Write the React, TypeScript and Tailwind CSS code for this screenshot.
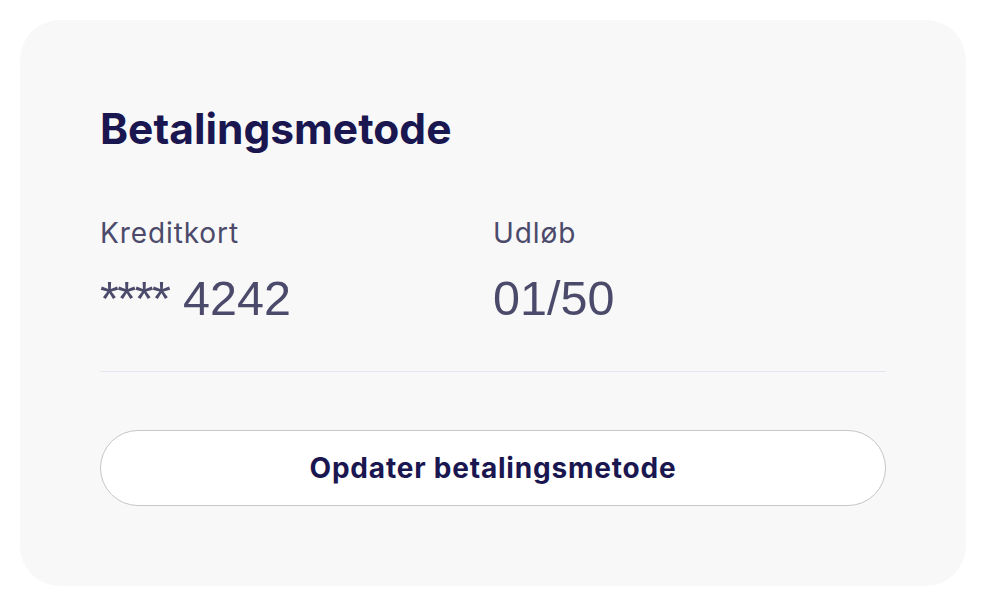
export default function App() {
  return (
    <div className="min-h-screen bg-white p-5 font-['Inter',sans-serif]">
      <section className="rounded-[40px] bg-[#f8f8f8] px-20 pt-[85px] pb-20">
        <h2 className="text-[42.5px] leading-[48px] font-bold text-[#1a1650]">
          Betalingsmetode
        </h2>

        <div className="mt-[63px] grid grid-cols-2">
          <CardField label="Kreditkort">
            <span className="tracking-[-1.5px]">****</span> 4242
          </CardField>
          <CardField label="Udløb">01/50</CardField>
        </div>

        <div className="mt-[45px] h-px bg-[#e3e6ef]" />

        <button
          type="button"
          className="mt-[58px] flex h-[76px] w-full items-center justify-center rounded-full border-[1.5px] border-[#c6c6cb] bg-white text-[28px] font-bold tracking-[0.8px] text-[#1a1650]"
        >
          Opdater betalingsmetode
        </button>
      </section>
    </div>
  );
}

function CardField({
  label,
  children,
}: {
  label: string;
  children: React.ReactNode;
}) {
  return (
    <div>
      <p className="text-[28px] leading-[34px] tracking-[0.9px] text-[#4b4a6b]">
        {label}
      </p>
      <p className="mt-5 font-['Liberation_Sans',Arial,sans-serif] text-[48.5px] leading-[56px] text-[#4b4a6b]">
        {children}
      </p>
    </div>
  );
}
